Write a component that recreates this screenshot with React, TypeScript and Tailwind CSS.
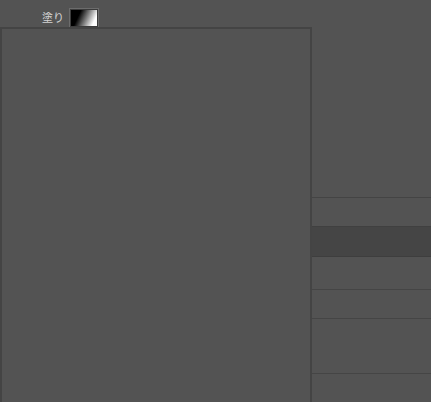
export default function App() {
  return (
    <div className="flex h-[402px] w-[431px] overflow-hidden bg-[#535353] font-['Noto_Sans_CJK_JP',sans-serif]">
      {/* left column: toolbar + canvas panel */}
      <div className="flex w-[312px] flex-col">
        <div className="flex h-[27px] items-start pl-[42px]">
          <span className="mt-[12px] text-[11px] leading-none text-[#d4d4d4]">塗り</span>
          <div className="ml-[5px] mt-[8px] h-[20px] w-[30px] border border-[#6c6c6c] bg-[#3c3c3c] p-px">
            <div className="h-full w-full bg-[linear-gradient(115deg,#000_0%,#000_30%,#fff_85%,#fff_100%)]" />
          </div>
        </div>
        <div className="flex-1 border-x-2 border-t-2 border-[#444444]" />
      </div>

      {/* right column: panel rows */}
      <div className="flex flex-1 flex-col">
        <div className="h-[198px] border-b border-[#444444]" />
        <div className="h-[29px] border-b border-[#404040]" />
        <div className="h-[30px] border-b border-[#3e3e3e] bg-[#454545]" />
        <div className="h-[33px] border-b border-[#454545]" />
        <div className="h-[29px] border-b border-[#454545]" />
        <div className="h-[55px] border-b border-[#454545]" />
        <div className="flex-1" />
      </div>
    </div>
  );
}
